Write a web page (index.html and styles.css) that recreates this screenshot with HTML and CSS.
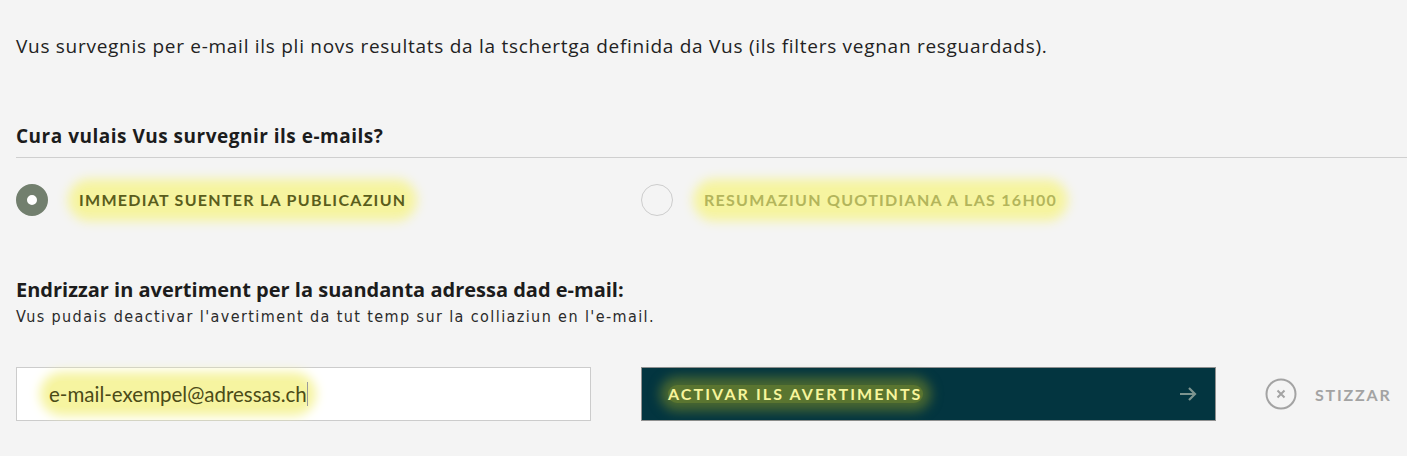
FILE: index.html
```html
<!DOCTYPE html>
<html lang="rm">
<head>
<meta charset="utf-8">
<title>Avertiments</title>
<link rel="stylesheet" href="styles.css">
</head>
<body>
<main class="page">
  <p class="intro">Vus survegnis per e-mail ils pli novs resultats da la tschertga definida da Vus (ils filters vegnan resguardads).</p>

  <h2 class="section-title">Cura vulais Vus survegnir ils e-mails?</h2>
  <div class="divider"></div>

  <div class="grid options">
    <label class="option">
      <span class="radio radio-on"></span>
      <span class="glow option-label option-label-on">IMMEDIAT SUENTER LA PUBLICAZIUN</span>
    </label>
    <label class="option">
      <span class="radio"></span>
      <span class="glow option-label option-label-off">RESUMAZIUN QUOTIDIANA A LAS 16H00</span>
    </label>
  </div>

  <h2 class="section-title address-title">Endrizzar in avertiment per la suandanta adressa dad e-mail:</h2>
  <p class="hint">Vus pudais deactivar l'avertiment da tut temp sur la colliaziun en l'e-mail.</p>

  <div class="grid form-row">
    <div class="input-box">
      <span class="glow input-text">e-mail-exempel@adressas.ch</span><span class="caret"></span>
    </div>
    <div class="actions">
      <button class="submit" type="button">
        <span class="glow-dark">ACTIVAR ILS AVERTIMENTS</span>
        <svg class="arrow" width="20" height="16" viewBox="0 0 20 16" aria-hidden="true">
          <path d="M2 8 H17 M11 2 L17 8 L11 14" fill="none" stroke="#7d948f" stroke-width="2.2"/>
        </svg>
      </button>
      <button class="cancel" type="button">
        <svg class="cancel-icon" width="32" height="32" viewBox="0 0 32 32" aria-hidden="true">
          <circle cx="16" cy="16" r="14.5" fill="none" stroke="#a3a3a3" stroke-width="2"/>
          <path d="M12.5 12.5 L19.5 19.5 M19.5 12.5 L12.5 19.5" stroke="#a3a3a3" stroke-width="2" fill="none"/>
        </svg>
        <span class="cancel-label">STIZZAR</span>
      </button>
    </div>
  </div>
</main>
</body>
</html>
```

FILE: styles.css
```css
* { box-sizing: border-box; }

html, body {
  margin: 0;
  padding: 0;
  background: #f4f4f4;
}

body {
  font-family: "Open Sans", "Noto Sans", "Liberation Sans", sans-serif;
  color: #1e1e1e;
}

.page {
  padding: 33px 0 0 16px;
}

.intro {
  margin: 0;
  font-size: 19px;
  letter-spacing: 0.72px;
  line-height: 26px;
  color: #222;
}

.section-title {
  margin: 0;
  font-size: 19px;
  font-weight: 700;
  letter-spacing: 0.5px;
  line-height: 26px;
  color: #1c1c1c;
}

.intro + .section-title {
  margin-top: 64px;
}

.divider {
  height: 1px;
  background: #cfcfcf;
  margin-top: 8px;
}

.grid {
  display: grid;
  grid-template-columns: 575px 575px;
  column-gap: 50px;
}

.options {
  margin-top: 26px;
}

.option {
  display: flex;
  align-items: center;
  height: 32px;
}

.radio {
  width: 32px;
  height: 32px;
  border-radius: 50%;
  border: 1px solid #cdcdcd;
  background: #f4f4f4;
  flex: none;
}

.radio-on {
  border: 11px solid #727f6e;
  background: #ffffff;
}

.glow {
  background: #f6f4a0;
  box-shadow: 0 0 11px 9px #f6f4a0;
  border-radius: 14px;
}

.option-label {
  margin-left: 29px;
  padding: 3px 2px;
  font-family: Lato, "Open Sans", sans-serif;
  font-size: 16px;
  font-weight: 700;
  letter-spacing: 1.28px;
  line-height: 18px;
}

.option-label-on { color: #5a5d1c; }
.option-label-off { color: #b3b55b; }

.address-title {
  margin-top: 61px;
  font-size: 20px;
  letter-spacing: 0;
}

.hint {
  margin: 4px 0 0;
  font-family: "DejaVu Sans Condensed", "DejaVu Sans", sans-serif;
  font-size: 16px;
  letter-spacing: 1.4px;
  line-height: 20px;
  color: #2a2a2a;
}

.form-row {
  margin-top: 40px;
}

.input-box {
  height: 54px;
  background: #ffffff;
  border: 1px solid #cccccc;
  display: flex;
  align-items: center;
  padding-left: 32px;
}

.input-text {
  font-family: Lato, "Open Sans", sans-serif;
  font-size: 20.5px;
  color: #4b4b17;
  padding: 2px 0;
  line-height: 22px;
}

.caret {
  width: 1px;
  height: 24px;
  background: #9a9a9a;
}

.actions {
  display: flex;
  align-items: center;
}

.submit {
  width: 575px;
  height: 54px;
  flex: none;
  background: #033540;
  border: 1px solid #8f9090;
  display: flex;
  align-items: center;
  justify-content: space-between;
  padding: 0 17px 0 26px;
  font-family: Lato, "Open Sans", sans-serif;
  cursor: pointer;
}

.glow-dark {
  font-size: 16px;
  font-weight: 700;
  letter-spacing: 2.1px;
  color: #f7f59c;
  background: #5a7530;
  box-shadow: 0 0 12px 8px #4a6830;
  border-radius: 14px;
  line-height: 18px;
}

.arrow { display: block; }

.cancel {
  margin-left: 49px;
  display: flex;
  align-items: center;
  background: none;
  border: 0;
  padding: 0;
  cursor: pointer;
  font-family: Lato, "Open Sans", sans-serif;
}

.cancel-icon { display: block; }

.cancel-label {
  margin-left: 18px;
  font-size: 16px;
  font-weight: 700;
  letter-spacing: 1.8px;
  color: #a3a3a3;
}
```
